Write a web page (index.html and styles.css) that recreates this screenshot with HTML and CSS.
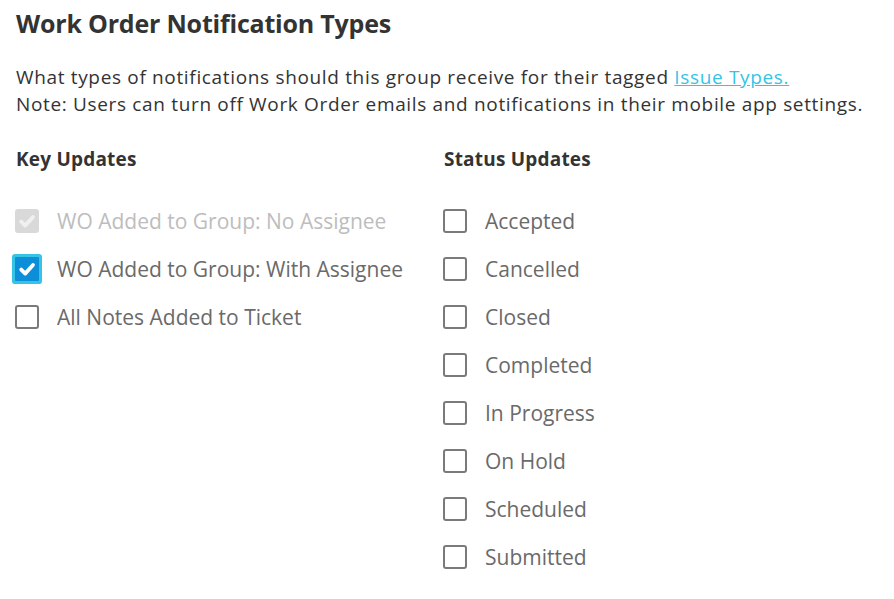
FILE: index.html
```html
<!DOCTYPE html>
<html>
<head>
<meta charset="utf-8">
<link rel="stylesheet" href="styles.css">
</head>
<body>
<div class="page">
  <h1 class="title">Work Order Notification Types</h1>
  <p class="desc">What types of notifications should this group receive for their tagged <a href="#" class="link">Issue Types.</a><br>Note: Users can turn off Work Order emails and notifications in their mobile app settings.</p>
  <div class="cols">
    <div class="col">
      <h2 class="col-title">Key Updates</h2>
      <ul class="list">
        <li class="item disabled"><span class="box box-disabled"><svg viewBox="0 0 24 24"><path d="M6.2 12.6l4 4L18 8" /></svg></span><span class="label">WO Added to Group: No Assignee</span></li>
        <li class="item"><span class="box box-checked"><svg viewBox="0 0 24 24"><path d="M6.2 12.6l4 4L18 8" /></svg></span><span class="label">WO Added to Group: With Assignee</span></li>
        <li class="item"><span class="box"></span><span class="label">All Notes Added to Ticket</span></li>
      </ul>
    </div>
    <div class="col">
      <h2 class="col-title">Status Updates</h2>
      <ul class="list">
        <li class="item"><span class="box"></span><span class="label">Accepted</span></li>
        <li class="item"><span class="box"></span><span class="label">Cancelled</span></li>
        <li class="item"><span class="box"></span><span class="label">Closed</span></li>
        <li class="item"><span class="box"></span><span class="label">Completed</span></li>
        <li class="item"><span class="box"></span><span class="label">In Progress</span></li>
        <li class="item"><span class="box"></span><span class="label">On Hold</span></li>
        <li class="item"><span class="box"></span><span class="label">Scheduled</span></li>
        <li class="item"><span class="box"></span><span class="label">Submitted</span></li>
      </ul>
    </div>
  </div>
</div>
</body>
</html>
```
FILE: styles.css
```css
html, body {
  margin: 0;
  padding: 0;
  background: #fff;
}
.page {
  padding: 7px 16px 0 16px;
  font-family: "Open Sans", "Noto Sans", sans-serif;
  color: #333;
}
.title {
  margin: 0;
  font-size: 25px;
  line-height: 32px;
  font-weight: 700;
  letter-spacing: -0.2px;
  color: #333;
}
.desc {
  margin: 25px 0 0 0;
  font-size: 19px;
  line-height: 27px;
  letter-spacing: 0.66px;
  color: #333;
}
.link {
  color: #35c4e6;
  text-decoration: underline;
}
.cols {
  display: grid;
  grid-template-columns: 428px 1fr;
  margin-top: 28px;
}
.col-title {
  margin: 0;
  font-size: 19px;
  line-height: 26px;
  font-weight: 700;
  letter-spacing: 0.2px;
  color: #333;
}
.list {
  list-style: none;
  margin: 37px 0 0 0;
  padding: 0;
  display: flex;
  flex-direction: column;
  gap: 24px;
}
.item {
  display: flex;
  align-items: center;
  height: 24px;
  gap: 18px;
}
.box {
  width: 24px;
  height: 24px;
  box-sizing: border-box;
  border: 2px solid #7a7a7a;
  border-radius: 3px;
  flex: none;
  position: relative;
  margin-left: -1px;
}
.box svg {
  position: absolute;
  left: -2px;
  top: -2px;
  width: 24px;
  height: 24px;
  fill: none;
  stroke: #fff;
  stroke-width: 3.8;
  stroke-linecap: round;
  stroke-linejoin: round;
}
.box-disabled {
  background: #d9d9d9;
  border-color: #d9d9d9;
}
.box-disabled svg {
  stroke: #f0f0f0;
}
.box-checked {
  background: #0c8fd8;
  border-color: #0c8fd8;
  border-radius: 1px;
  box-shadow: 0 0 0 3px #35c4e6;
}
.label {
  font-size: 21px;
  color: #6a6a6a;
  line-height: 24px;
}
.disabled .label {
  color: #bdbdbd;
}
```
